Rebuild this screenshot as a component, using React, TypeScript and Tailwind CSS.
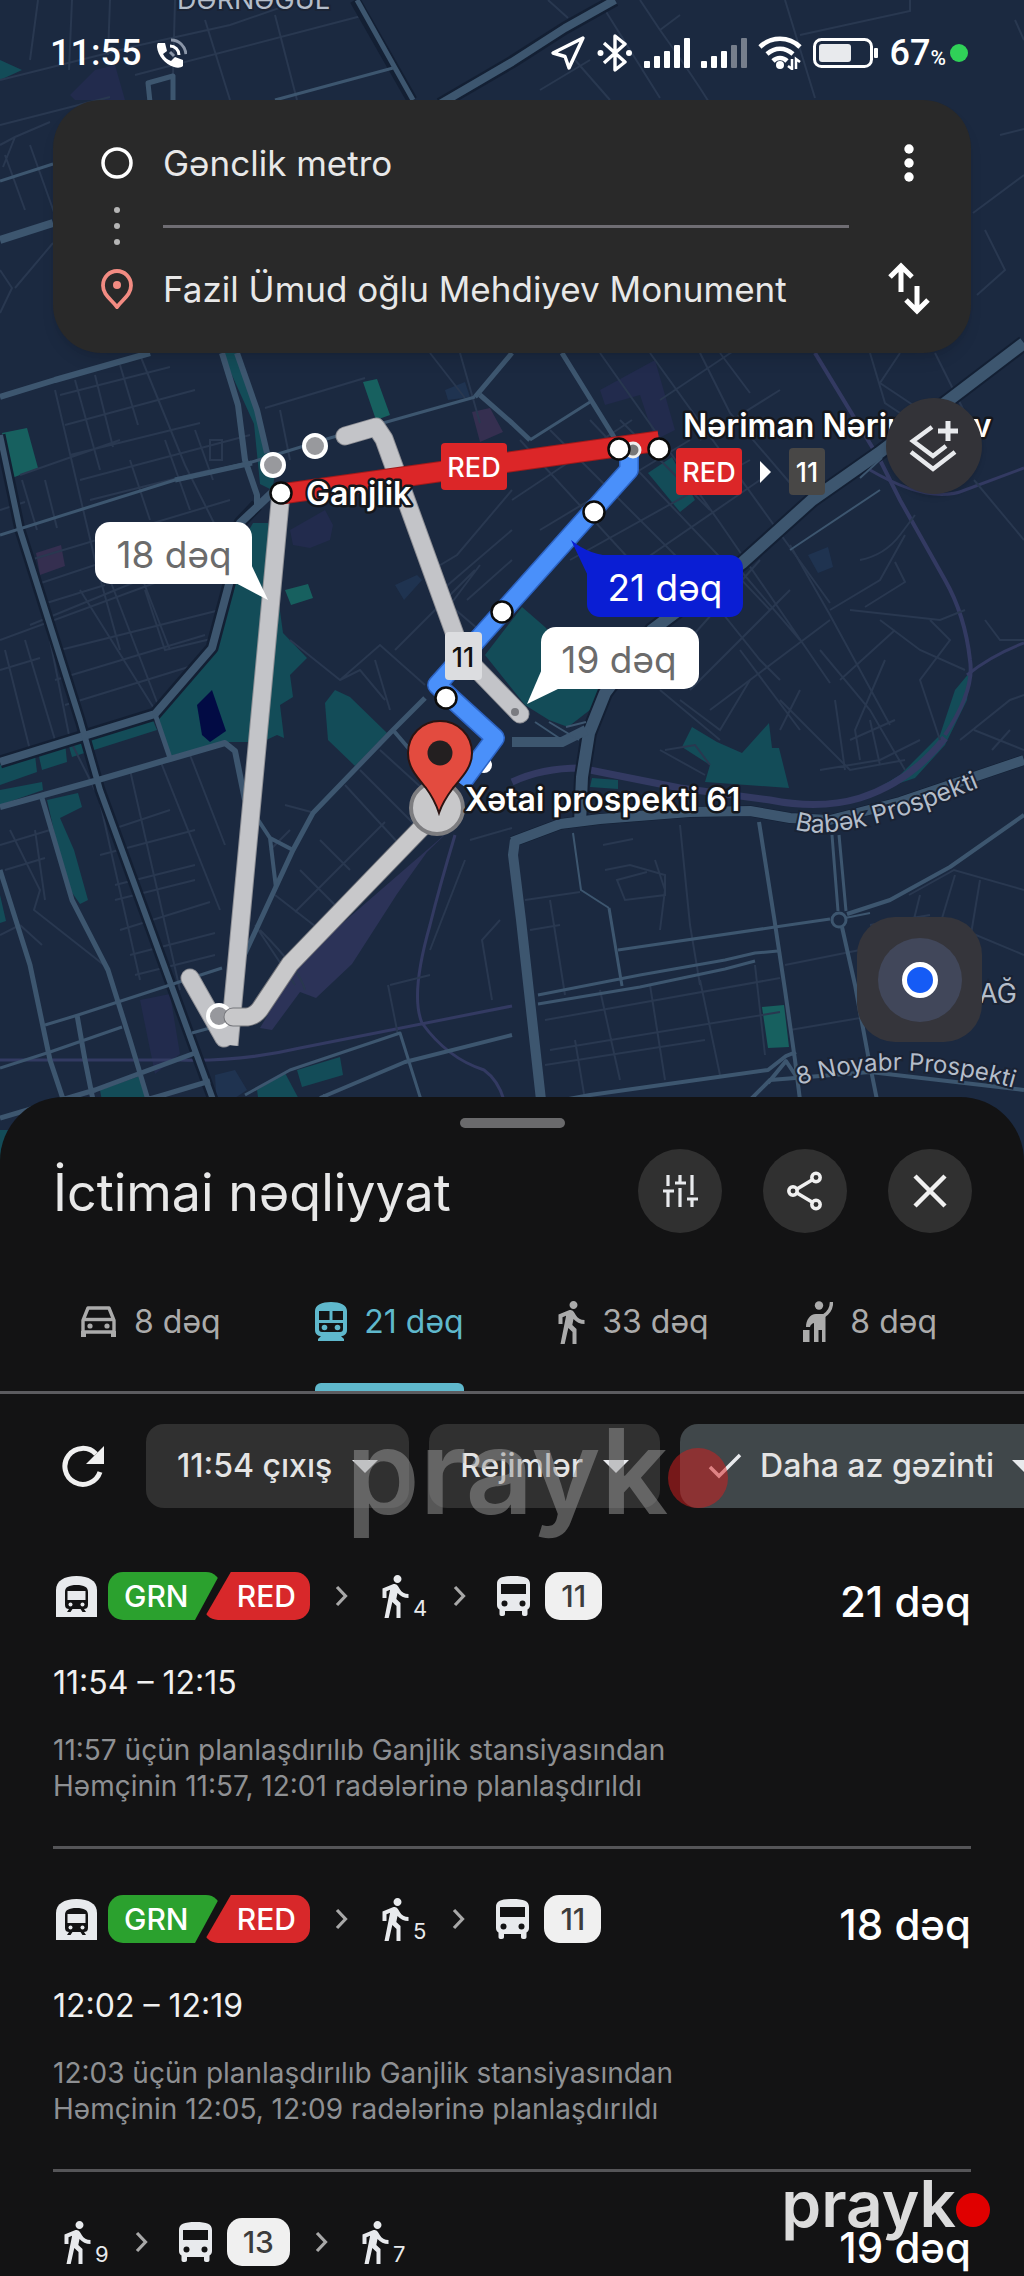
import { useState } from "react";

type Step =
  | { kind: "metro"; lines: [string, string] }
  | { kind: "walk"; min: number }
  | { kind: "bus"; line: string };

type Route = {
  id: number;
  steps: Step[];
  duration: string;
  time?: string;
  details?: string[];
};

const ROUTES: Route[] = [
  {
    id: 1,
    steps: [{ kind: "metro", lines: ["GRN", "RED"] }, { kind: "walk", min: 4 }, { kind: "bus", line: "11" }],
    duration: "21 dəq",
    time: "11:54 – 12:15",
    details: ["11:57 üçün planlaşdırılıb Ganjlik stansiyasından", "Həmçinin 11:57, 12:01 radələrinə planlaşdırıldı"],
  },
  {
    id: 2,
    steps: [{ kind: "metro", lines: ["GRN", "RED"] }, { kind: "walk", min: 5 }, { kind: "bus", line: "11" }],
    duration: "18 dəq",
    time: "12:02 – 12:19",
    details: ["12:03 üçün planlaşdırılıb Ganjlik stansiyasından", "Həmçinin 12:05, 12:09 radələrinə planlaşdırıldı"],
  },
  {
    id: 3,
    steps: [{ kind: "walk", min: 9 }, { kind: "bus", line: "13" }, { kind: "walk", min: 7 }],
    duration: "19 dəq",
  },
];

const MODES = [
  { id: "car", label: "8 dəq", Icon: CarIcon },
  { id: "transit", label: "21 dəq", Icon: TrainIcon },
  { id: "walk", label: "33 dəq", Icon: WalkIcon },
  { id: "hail", label: "8 dəq", Icon: HailIcon },
];

// ---------- icons ----------

function CarIcon() {
  return (
    <svg viewBox="0 0 37 32" className="h-8 w-[37px]" fill="none" stroke="currentColor" strokeWidth="3.4" strokeLinejoin="round">
      <path d="M3 14.5L8 2h21l5 12.5V26H3z" />
      <path d="M3 13.5h31" />
      <path d="M3.5 25v6M33.5 25v6" strokeWidth="5" />
      <circle cx="10" cy="20" r="2.6" fill="currentColor" stroke="none" />
      <circle cx="27" cy="20" r="2.6" fill="currentColor" stroke="none" />
    </svg>
  );
}

function TrainIcon() {
  return (
    <svg viewBox="0 0 32 40" className="h-10 w-8">
      <path fill="currentColor" d="M16 0C7 0 0 3 0 9v19c0 4 3 6 6 6l-3 3v2h26v-2l-3-3c3 0 6-2 6-6V9c0-6-7-9-16-9z" />
      <path fill="#131314" d="M4 9h10.500v9H4zM17.500 9H28v9H17.500zM4 21h24v6c0 2-1 3-3 3H7c-2 0-3-1-3-3z" />
      <circle cx="9.500" cy="25.500" r="2.800" fill="currentColor" />
      <circle cx="22.500" cy="25.500" r="2.800" fill="currentColor" />
    </svg>
  );
}

function WalkIcon() {
  return (
    <svg viewBox="6 1.5 13 21.5" className="h-[43px] w-[27px]" fill="currentColor">
      <path d="M13.5 5.5c1.1 0 2-.9 2-2s-.9-2-2-2-2 .9-2 2 .9 2 2 2zM9.8 8.9L7 23h2.1l1.8-8 2.1 2v6h2v-7.5l-2.1-2 .6-3C14.8 12 16.8 13 19 13v-2c-1.9 0-3.5-1-4.3-2.4l-1-1.6c-.4-.6-1-1-1.7-1-.3 0-.5.1-.8.1L6 8.3V13h2V9.6l1.8-.7" />
    </svg>
  );
}

function HailIcon() {
  return (
    <svg viewBox="0 0 30 42" className="h-[42px] w-[30px]" fill="currentColor">
      <circle cx="16" cy="4.500" r="4.200" />
      <path d="M28.500 1c0 7-3 11-8 14" fill="none" stroke="currentColor" strokeWidth="3.400" />
      <path d="M13 13h9.500v28H19V29h-3.500v12H11V22c-2 .5-3.500 2-4 4H3c0-7 4-13 10-13z" />
      <path d="M0 29h6.500v12H0z" />
    </svg>
  );
}

function MetroIcon() {
  return (
    <svg viewBox="0 0 41 41" className="h-[41px] w-[41px] shrink-0">
      <path fill="#e8eaed" d="M0 41V14C0 5 8 0 20.500 0S41 5 41 14v27z" />
      <path fill="#131314" d="M20.500 9C13 9 9 11 9 16v13c0 3 2 4 4 4l-2 3h3.500l2-3h8l2 3H30l-2-3c2 0 4-1 4-4V16c0-5-4-7-11.500-7z" />
      <path fill="#e8eaed" d="M11.500 15h18v9h-18z" />
      <circle cx="14.500" cy="28.500" r="2" fill="#e8eaed" />
      <circle cx="26.500" cy="28.500" r="2" fill="#e8eaed" />
    </svg>
  );
}

function BusIcon() {
  return (
    <svg viewBox="0 0 33 40" className="h-10 w-[33px] shrink-0">
      <path fill="#e8eaed" d="M16.500 0C5 0 0 2 0 8v21c0 2 1 3.500 2.500 4.500V38c0 1 .7 2 2 2H6c1.200 0 2-1 2-2v-3h17v3c0 1 .8 2 2 2h1.500c1.300 0 2-1 2-2v-4.500C32 32.500 33 31 33 29V8c0-6-5-8-16.500-8z" />
      <path fill="#131314" d="M4 8h25v10H4z" />
      <circle cx="7.500" cy="27.500" r="3" fill="#131314" />
      <circle cx="25.500" cy="27.500" r="3" fill="#131314" />
    </svg>
  );
}

function Chevron() {
  return (
    <svg viewBox="0 0 14 22" className="h-[22px] w-[14px] shrink-0" fill="none" stroke="#a8a8a8" strokeWidth="3.200">
      <path d="M2 2l8.500 9L2 20" />
    </svg>
  );
}

function Caret() {
  return (
    <svg viewBox="0 0 26 13" className="h-[13px] w-[26px] shrink-0" fill="#e8eaed">
      <path d="M0 0h26L13 13z" />
    </svg>
  );
}

function Signal({ level }: { level: number }) {
  return (
    <svg viewBox="0 0 46 30" className="h-[30px] w-[46px]" fill="#fff">
      {[7, 12, 17, 23, 30].map((h, i) => (
        <rect key={h} x={i * 10} y={30 - h} width="6" height={h} rx="1" opacity={i < level ? 1 : 0.4} />
      ))}
    </svg>
  );
}

// ---------- status bar ----------

function StatusBar() {
  return (
    <header className="flex h-[100px] items-center justify-between pb-2 pl-[50px] pr-[56px] pt-[14px] text-white">
      <div className="flex items-center gap-4">
        <span className="font-[Roboto] text-4xl font-medium">11:55</span>
        <svg viewBox="0 0 30 30" className="h-[30px] w-[30px]" fill="none">
          <path fill="#fff" d="M1 5h7l2 8-4 3c2 4 5 6 8 7l4-4 8 3v6c-2 2-6 2-9 1C8 26 1 18 0 9c0-2 0-3 1-4z" />
          <path d="M13 8c5 0 9 4 9 9" stroke="#fff" strokeWidth="3" />
          <path d="M14 2c8 0 14 6 15 14" stroke="#8b96a8" strokeWidth="3" />
          <path d="M13 14l4 4" stroke="#8b96a8" strokeWidth="3" />
        </svg>
      </div>
      <div className="flex items-center gap-[11px]">
        <svg viewBox="0 0 36 36" className="h-9 w-9" fill="none" stroke="#fff" strokeWidth="3.400" strokeLinejoin="round">
          <path d="M33 3L3 18l12 3.500L19 33z" />
        </svg>
        <svg viewBox="0 0 36 38" className="h-[38px] w-9" fill="none" stroke="#fff" strokeWidth="3.400" strokeLinejoin="round">
          <path d="M7 9l21 19-10 8V2l10 8L7 29" />
          <circle cx="3.500" cy="19" r="3" fill="#fff" stroke="none" />
          <circle cx="32" cy="19" r="3" fill="#fff" stroke="none" />
        </svg>
        <Signal level={5} />
        <Signal level={3} />
        <svg viewBox="0 0 44 34" className="h-[34px] w-11" fill="none" stroke="#fff" strokeWidth="4.600">
          <path d="M2 11c11-11 29-11 40 0" />
          <path d="M9 18c8-7 18-7 26 0" />
          <path d="M15 25c4-4 10-4 14 0" />
          <circle cx="22" cy="29" r="4" fill="#fff" stroke="none" />
          <path d="M34 23v10l-4-3M38 33V23l4 3" strokeWidth="2.500" />
        </svg>
        <svg viewBox="0 0 66 30" className="h-[30px] w-[66px]">
          <rect x="1.500" y="1.500" width="57" height="27" rx="7" fill="none" stroke="#fff" strokeWidth="3" />
          <rect x="6" y="6" width="32" height="18" rx="3" fill="#e8eaed" />
          <rect x="61" y="10" width="4" height="10" rx="1" fill="#fff" />
        </svg>
        <div className="flex items-center">
          <span className="font-[Roboto] text-4xl font-medium">
            67<span className="text-[21px]">%</span>
          </span>
          <span className="ml-1 h-[18px] w-[18px] rounded-full bg-[#30d158]" />
        </div>
      </div>
    </header>
  );
}

// ---------- map ----------

function StopDot({ x, y }: { x: number; y: number }) {
  return <circle cx={x} cy={y} r="10.500" fill="#fff" stroke="#0b0b0b" strokeWidth="2.500" />;
}

function MapCanvas() {
  return (
    <svg
      viewBox="0 0 1024 1170"
      preserveAspectRatio="xMidYMin slice"
      className="absolute inset-x-0 top-0 h-[1170px] w-full bg-[#1b2940]"
      role="img"
      aria-label="Xəritə"
    >
      {/* parks */}
      <g fill="#134c58">
        <path d="M0 60l22 10-22 10zM222 353l16 0 20 57 8 40 10 20-4 20-12-6-6-60z" />
        <path d="M253 523h15l15 110 24 25-17 17 3 22-13 8 4 33-7-3-15 7h-39l-53 14-12-38 54-63 16-55 4-40z" />
        <path d="M325 703l10-13 15 7 37 36-32 33-27-26z" />
        <path d="M0 765l35-10 2 17-37 13zM38 752l27-10 2 20-25 8zM68 743l84-25 5 12-85 27zM0 790l42-8 1 8-43 15zM47 800l31-7 4 14-22 11 14 32 14 50-8 4-14-20z" />
        <path d="M0 895l6 26-6 2zM100 1090l40-14 10 30-45 12zM257 1090l28-17 17 32-40 20zM0 1130h20l-20 50z" />
        <path d="M485 655l37-48 23 20 55 63-5 16-27 21-19-7-24-15zM648 473l24-16 23 43-15 12z" />
        <path d="M692 727l25 15 25 11 27-30 3 25h7l10 40-84-6 5-17-28-18zM592 778l26 2v9l-28-2z" />
        <path d="M970 672l-15 18-15 45-40 40-30 18 45-15 30-33 22-45zM297 1070l43-13 3 18-41 12z" />
      </g>
      <g fill="#17605f">
        <path d="M2 433l25-5 11 40-26 10zM285 590l23-6 5 14-22 7zM363 382l14-3 13 36-14 5zM762 1007l22-2 5 42-21 1z" />
      </g>
      <path fill="#020b44" d="M197 705l15-15 14 41-16 11-8-7z" />
      <path fill="#352f50" d="M36 553l25-8 4 21-25 9zM472 412l18-4 13 24-23 10z" />
      <path fill="#222b4d" d="M290 530l35-20 8 15-3 15-20 8-17-3zM95 70l20-5 10 35H75l-5-5zM140 1000l30-6 10 60-25 20zM600 390l55-30 20 70-20 10-15-45-35 10z" />
      <path fill="#1f3350" d="M395 585l22-10 5 5-18 20zM808 555l20-8 5 20-15 6zM215 1075l20-5 12 20-30 20zM445 390l20-8 5 15-22 3z" />

      {/* railways */}
      <g fill="none" stroke="#333a62">
        <path strokeWidth="7" d="M512 782q30-14 68-14l100 20 90 12q50 10 90-2 50-16 85-60" />
        <path strokeWidth="4" d="M945 735q30-45 25-75-5-45-25-80l-45-80-20-40-65-107" />
        <path strokeWidth="3" d="M455 835q-15 50-25 90-20 70-8 98 25 35 62 47 14 10 20 30M0 1060h180q60 2 120-12l212-42M870 470q60 35 95 20l59-22M967 675q25-20 57-32" />
      </g>
      <path fill="#2c3358" d="M450 830L300 960l-40 68 12 2 28-38 16 6 36-34 45-70 30-42z" />

      {/* minor streets */}
      <g fill="none" stroke="#293850" strokeWidth="2">
        <path d="M38 0l-8 60M72 0l-3 70M110 0l-2 55M175 0l-2 75M0 80l140-35 90-20 130-45M205 20l25 80M275 15l22 85M135 75l230-60M0 125l110-28M0 145l15-8 35-15M15 137l-12 30M5 155l20 55M30 145l25 70M0 270l12 18-12 25M15 288l38-45" />
        <path d="M548 0l20 18M640 0l20 30q50 70 65 100M605 10l55 88M575 60l35 40M540 90l50-30M785 0l30 98M800 35l110-24V0M660 30l20-15M1015 20l9 20M985 230l20 40-28 25" />
        <path d="M55 390l40 170 25 90M75 380l25 90M95 375l18 72M120 365l18 60M140 355l45 110 45 90M60 395l110-28M65 425l130-35M70 455l130-32M80 480l170-45M20 475l100-35M0 510l25-8M22 480l15 50M45 480l12 48M90 500l120-30M130 460l20 60M165 440l25 70M195 430l18 50M210 440h12v20h-12z" />
        <path d="M30 560l200-60M35 585l90-30M40 605l65-20M30 625l110-45M0 640l190-70M145 590l20 60 50-12M60 650l160-40M55 680l150-45M65 705l130-40M80 590l75 120M110 580l50 130M135 560l35 90M0 670l40-12M5 650l25 100M25 640l30 100M50 640l20 100M70 740l25 50M95 780l45 200M130 770l50 220M160 760l60 150M190 755l35 90" />
        <path d="M10 830l30 60-6 20 70 55M0 845l50-15M5 870l40-12M110 830l60-20M100 855l95-25M115 885l80-20M115 900l80-20M120 930l90-28M130 955l85-22M135 975l80-20M35 830l10 70M20 925l22 20M0 935l20-10" />
        <path d="M265 408l100-30M280 410l10 50M430 353l35 45M460 353l20 70M512 490l-55 65-25 15M512 530l-70 60M480 565l-30 40 35 30M512 560l-45 40M395 650l80-80M290 640l50 40 40-35 45 40M340 680l20-10 25 30M375 660l15 50" />
        <path d="M600 353l120 170 110 160M650 353l180 250M700 353l30 60 60 70M720 353l30 40M512 500l120-80M540 530l150-90M570 560l180-100M600 590l160-110M520 440l110 120M550 430l180 180M590 420l180 190M620 420l90 90M660 400l90-60M700 440l80-50M760 560l-80 90M790 590l-100 100M830 620l-120 90M680 560l80 100 20 20M740 570l60 70" />
        <path d="M790 545l40 70 60 110M830 610l50-30 25-45M860 560q25-5 40-25l15-20M895 562l10 20-40 25M850 610l90 10 25-10M880 620l40 30 45 20M820 650l50 60 35 60M840 680l55-50M885 660l-30 70 5 30M780 700l70 70 55-10M800 690l-20 40M740 650l60 80M930 620l20 20-30 40 20 60M985 620l15 20h24M1024 540l-50-60M960 740l50-40 14-5M1024 750l-50-20M1010 730l-18 20" />
        <path d="M660 750l45 25M665 750l30-5 15 20M680 700l40 30 30-50M720 740l-60-50M820 770l60-10 40-20M835 700l10 70M870 720l10 45M850 740l45-20" />
        <path d="M603 845l30-6M605 870l25-5 35 10v20l-40 5-8-20 30-8M655 860l10 30-5 40M680 825l10 100 10 60M525 900l55-8M550 900l15 95M530 930l30-5M785 965l110-22M790 1030l70-12M1024 890l-70-20-45 25M980 880l-10 60M955 875l-15 50M920 895l-10 40M1024 955l-60-25M870 925l60-10" />
        <path d="M545 1020l235-42M550 1050l230-38M545 1065l160-25M600 990l20 90M650 985l15 95M700 980l20 95M755 965l10 90M575 1040l10 60M500 920l-18 20 10 60M390 985l40-10M388 985l10 50M465 860l-35 90M470 840l42-12" />
        <path d="M290 830l-20 20M285 805l30 8M360 770l60 60M345 785l55 60M380 750l55 50M295 912l90-90M320 840l30 30M300 870l40 40M275 895l45 35M255 925l40 60M260 930q40 40 45 60" />
        <path d="M973 213l51-38M1000 135l24-6M870 353l15 50 30 20M935 353l30 60M900 353l-20 30 60 40" />
      </g>

      {/* roads: dark casing below, fill on top */}
      <g fill="none" strokeLinejoin="round">
        <g stroke="#131f33">
          <path strokeWidth="16" d="M1024 343l-75 57-70 53-67 47-70 63-90 67-47 63-16 40-7 44-2 46" />
          <path strokeWidth="13" d="M615 0l-50 28-53 34-72 42M257 505l-17 18-8 50-20 75-57 66-155 48" />
          <path strokeWidth="11" d="M0 435l20 95 60 190 20 70 115 315 20 60M355 0l57 100M512 842l48-18 40-5 90-7 60-1 40 7 40 2 70-18 124-42" />
        </g>
        <g stroke="#3d566f">
          <path strokeWidth="12" d="M1024 343l-75 57-70 53-67 47-70 63-90 67-47 63-16 40-7 44-2 46" />
          <path strokeWidth="10" d="M512 842l48-18 40-5 90-7 60-1 40 7 40 2 70-18 124-42M512 742h50l24-12M515 840l-2 15 8 65 20 180 10 60" />
          <path strokeWidth="8" d="M615 0l-50 28-53 34-72 42M275 490l-35 33-8 50-20 75-57 66-155 48M0 240l53-17" />
          <path strokeWidth="6" d="M0 435l20 95 60 190 20 70 115 315 20 60M0 397l55-17 95-27M222 353l16 52 7 55 12 35v10M237 353l20 57 10 43M0 807l98-27 72-21 55-16 10 8 10 49" />
          <path strokeWidth="5" d="M357 0l56 100M150 102l-2-19 25-7v26M175 480l77-17M42 798l30 102 36 70 22 70 24 80M0 870l30 95 20 95 30 90M155 714l15 44M425 698l-32 32-80 83-20 37-50 108M77 1015l8 45 20 100M0 1118l95-28 100-37M110 1110l50-14 50-15M480 395l32 28 18 17M562 353l60 97M475 397l37-44" />
          <path strokeWidth="4" d="M320 1098l85-36 107-27M295 1140l30-45M759 822l15 95 11 73 10 70 5 40M842 927l13 58 13 70 12 60M847 914l43-14 60-33 74-52M500 1112l90-17 178-25 18-14 10-4M730 1120l40-40 100-8 154 18M390 1140l-20-30M245 800l25 38 23 12M270 838l6 50M393 730l17 20" />
          <path strokeWidth="3" d="M0 181l53-17M275 100l118-32M0 535l175-55 77-18 78-24 145-41M530 440l60-38M0 1068l50-16 72-25M45 1025l33-10 92-30 52-17M192 1033l18-5M245 1095l45-25 110-37 22 70M832 835l6 76M839 835l7 76M618 950l157-23 55-8M538 995l102-20 85-15 30-7 23-2M538 1004l102-17 85-18 30-8M609 908l13 78" />
          <path strokeWidth="2" d="M573 833l8 57 28 18M535 722l27 18M549 722l30 18M566 727l20-5M845 918l25-5M790 550l90-60M860 478l22-20" />
          <circle cx="839" cy="920" r="7" strokeWidth="3" fill="#1b2940" />
          <path strokeWidth="4" d="M768 1083l18-22 12 18" />
        </g>
      </g>

      {/* place names under the routes */}
      <g fill="#b4bdca" stroke="#1a2334" strokeWidth="4" paintOrder="stroke" fontSize="27">
        <text x="177" y="9">DƏRNƏGÜL</text>
        <text x="979" y="1003">AĞ</text>
        <path id="babek" d="M795 829q50 18 215-55" fill="none" stroke="none" />
        <path id="noyabr" d="M799 1085q100-32 225 6" fill="none" stroke="none" />
        <text fontSize="25"><textPath href="#babek">Babək Prospekti</textPath></text>
        <text fontSize="24"><textPath href="#noyabr">8 Noyabr Prospekti</textPath></text>
      </g>

      {/* alternative routes */}
      <g fill="none" stroke="#8f9096" strokeWidth="19" strokeLinejoin="round">
        <path strokeLinecap="round" d="M345 436l31-9 8 12 78 215 58 60" />
        <path d="M281 492l-52 553" />
        <path strokeLinecap="round" d="M190 978l34 60" />
      </g>
      <g fill="none" stroke="#c3c4c8" strokeWidth="17" strokeLinejoin="round">
        <path strokeLinecap="round" d="M345 436l31-9 8 12 78 215 58 60" />
        <path d="M281 492l-52 553" />
        <path strokeLinecap="round" d="M190 978l34 60" />
      </g>
      <circle cx="219" cy="1016" r="11" fill="#97989d" stroke="#fff" strokeWidth="4" />
      <g fill="none" strokeLinejoin="round" strokeLinecap="round">
        <path stroke="#75767b" strokeWidth="19" d="M233 1017h14q8-1 13-8l30-45 140-145" />
        <path stroke="#c8c8ca" strokeWidth="17" d="M233 1017h14q8-1 13-8l30-45 140-145" />
      </g>
      <circle cx="515" cy="712" r="4" fill="#7a7b80" />

      {/* selected route */}
      <circle cx="484" cy="765" r="8" fill="#fff" />
      <g fill="none" strokeLinejoin="round">
        <path stroke="#2d64c4" strokeWidth="20" d="M629 452v18L437 685l58 53-34 46" />
        <path stroke="#4a90fa" strokeWidth="17" d="M629 452v18L437 685l58 53-34 46" />
        <path stroke="#a01a1a" strokeWidth="21" d="M281 494l378-53" />
        <path stroke="#dc2628" strokeWidth="19" d="M281 494l378-53" />
      </g>
      <circle cx="633" cy="450" r="7" fill="#777" stroke="#eee" strokeWidth="3" />
      <circle cx="273" cy="465" r="11" fill="#98999d" stroke="#fff" strokeWidth="4" />
      <circle cx="315" cy="446" r="11" fill="#98999d" stroke="#fff" strokeWidth="4" />
      <StopDot x={281} y={493} />
      <StopDot x={619} y={449} />
      <StopDot x={659} y={449} />
      <StopDot x={594} y={512} />
      <StopDot x={502} y={612} />
      <StopDot x={446} y={698} />

      {/* destination */}
      <circle cx="437" cy="808" r="26" fill="#c8c8ca" stroke="#7d7d80" strokeWidth="4" />
      <path
        d="M440 721c-18 0-32 14-32 32 0 14 8 23 18 35 6 8 10 16 13 25 3-9 8-17 14-25 10-12 19-21 19-35 0-18-14-32-32-32z"
        fill="#e34b3f" stroke="#2b1412" strokeWidth="2"
      />
      <circle cx="440" cy="753" r="12.500" fill="#231f20" />

      {/* line badges */}
      <rect x="441" y="443" width="66" height="47" rx="4" fill="#dc2628" />
      <rect x="676" y="448" width="66" height="47" rx="4" fill="#dc2628" />
      <rect x="789" y="448" width="36" height="47" rx="4" fill="#484746" />
      <rect x="445" y="632" width="37" height="48" rx="4" fill="#dcdde0" />
      <path d="M760 461l11 11-11 11z" fill="#fff" />
      <g fontSize="27" fontWeight="500" textAnchor="middle" fill="#fff">
        <text x="474" y="477">RED</text>
        <text x="709" y="482">RED</text>
        <text x="807" y="482">11</text>
        <text x="463" y="667" fill="#111">11</text>
      </g>

      {/* stop names */}
      <g fill="#fff" stroke="#15171c" strokeWidth="5" strokeLinejoin="round" paintOrder="stroke" fontSize="32" fontWeight="600">
        <text x="306" y="505">Ganjlik</text>
        <text x="683" y="437">Nəriman Nərimanov</text>
        <text x="465" y="811">Xətai prospekti 61</text>
      </g>

      {/* duration bubbles */}
      <path d="M230 580l38 20-18-38z" fill="#fff" />
      <rect x="95" y="522" width="157" height="62" rx="15" fill="#fff" />
      <path d="M571 540l18 38 26-22q-25 0-44-16z" fill="#0a1ed4" />
      <rect x="587" y="555" width="156" height="62" rx="13" fill="#0a1ed4" />
      <path d="M527 704l18-42 15 26z" fill="#fff" />
      <rect x="541" y="627" width="158" height="62" rx="15" fill="#fff" />
      <g fontSize="37" fill="#6b6b6b" textAnchor="middle">
        <text x="174" y="568">18 dəq</text>
        <text x="665" y="601" fill="#fff">21 dəq</text>
        <text x="619" y="673">19 dəq</text>
      </g>
    </svg>
  );
}

// ---------- search card ----------

function SearchCard() {
  const [from, setFrom] = useState("Gənclik metro");
  const [to, setTo] = useState("Fazil Ümud oğlu Mehdiyev Monument");

  const swap = () => {
    setFrom(to);
    setTo(from);
  };

  return (
    <div className="mx-[53px] grid grid-cols-[32px_1fr_60px] items-center gap-x-[30px] rounded-[48px] bg-[#292929] pb-[26px] pl-12 pr-8 pt-[25px] shadow-lg">
      <svg viewBox="0 0 32 32" className="h-8 w-8" fill="none" stroke="#fff" strokeWidth="3.500">
        <circle cx="16" cy="16" r="14" />
      </svg>
      <input
        aria-label="Başlanğıc"
        value={from}
        onChange={(e) => setFrom(e.target.value)}
        className="h-[76px] w-full bg-transparent text-[35px] text-[#e8e8e8] outline-none"
      />
      <button aria-label="Digər seçimlər" className="flex h-[76px] items-center justify-center">
        <svg viewBox="0 0 10 40" className="h-10 w-[10px]" fill="#fff">
          <circle cx="5" cy="6" r="4.700" />
          <circle cx="5" cy="20" r="4.700" />
          <circle cx="5" cy="34" r="4.700" />
        </svg>
      </button>

      <svg viewBox="0 0 32 50" className="h-[50px] w-8" fill="#b5b5b5">
        <circle cx="16" cy="9" r="3" />
        <circle cx="16" cy="25" r="3" />
        <circle cx="16" cy="41" r="3" />
      </svg>
      <div className="h-[3px] bg-[#6f6d73]" />
      <span />

      <svg viewBox="0 0 32 40" className="h-10 w-8" fill="none" stroke="#f28b82" strokeWidth="3.800">
        <path d="M16 2C8.500 2 2 8 2 16.500 2 26 10 30 16 38c6-8 14-12 14-21.500C30 8 23.500 2 16 2z" />
        <circle cx="16" cy="16" r="4" fill="#f28b82" stroke="none" />
      </svg>
      <input
        aria-label="Təyinat"
        value={to}
        onChange={(e) => setTo(e.target.value)}
        className="h-[76px] w-full bg-transparent text-[35px] text-[#e8e8e8] outline-none"
      />
      <button onClick={swap} aria-label="Yerlərini dəyiş" className="flex h-[76px] items-center justify-center">
        <svg viewBox="0 0 42 54" className="h-[54px] w-[42px]" fill="none" stroke="#fff" strokeWidth="5">
          <path d="M13 30V5M2 15L13 4l11 11" />
          <path d="M29 24v25M18 38l11 11 11-11" />
        </svg>
      </button>
    </div>
  );
}

// ---------- bottom sheet ----------

function StepView({ step }: { step: Step }) {
  if (step.kind === "metro") {
    return (
      <div className="flex items-center gap-[11px] px-[3px]">
        <MetroIcon />
        <div className="flex text-[30px] font-medium leading-[48px] text-white">
          <span className="w-[113px] rounded-[15px] bg-[#2ba12e] pl-4 [clip-path:polygon(0_0,100%_0,77%_100%,0_100%)]">
            {step.lines[0]}
          </span>
          <span className="-ml-[18px] w-[107px] rounded-[15px] bg-[#d8282a] pr-[14px] text-right [clip-path:polygon(26%_0,100%_0,100%_100%,0_100%)]">
            {step.lines[1]}
          </span>
        </div>
      </div>
    );
  }
  if (step.kind === "walk") {
    return (
      <div className="flex items-end gap-1 pl-[11px] pr-1 text-[#e8eaed]">
        <WalkIcon />
        <span className="text-[22px] leading-5">{step.min}</span>
      </div>
    );
  }
  return (
    <div className="flex items-center gap-[15px] pl-2 pr-[3px]">
      <BusIcon />
      <span className="rounded-[15px] bg-[#f0f0f0] px-4 text-[30px] font-medium leading-[48px] text-[#3c3c3c]">
        {step.line}
      </span>
    </div>
  );
}

function RouteItem({ route }: { route: Route }) {
  return (
    <li className="border-b-[3px] border-[#555558] pb-[42px] pt-10 last:border-0 last:pb-0">
      <div className="flex items-center justify-between">
        <div className="flex items-center gap-[22px]">
          {route.steps.map((s, i) => (
            <div key={i} className="flex items-center gap-[22px]">
              {i > 0 && <Chevron />}
              <StepView step={s} />
            </div>
          ))}
        </div>
        <span className="pt-3 text-[42px] font-medium leading-[48px] text-white">{route.duration}</span>
      </div>
      {route.time && <p className="mt-[37px] text-[32px] leading-10 text-[#f0f0f0]">{route.time}</p>}
      {route.details && (
        <div className="mt-[29px] text-[28px] leading-9 text-[#8e9093]">
          {route.details.map((d) => <p key={d}>{d}</p>)}
        </div>
      )}
    </li>
  );
}

function Sheet() {
  const [mode, setMode] = useState("transit");

  return (
    <section className="relative rounded-t-[64px] bg-[#131314] pt-[21px]">
      <div className="mx-auto h-[10px] w-[105px] rounded-full bg-[#6a6a6c]" />

      <div className="flex items-center justify-between pl-[53px] pr-[52px] pt-[21px]">
        <h1 className="pt-[3px] text-[52px] leading-[81px] text-[#e8e8e8]">İctimai nəqliyyat</h1>
        <div className="flex gap-[41px]">
          <button aria-label="Seçimlər" className="flex h-[84px] w-[84px] items-center justify-center rounded-full bg-[#303030]">
            <svg viewBox="0 0 36 34" className="h-[34px] w-9" fill="none" stroke="#e8eaed" strokeWidth="3.200">
              <path d="M6 1v11M6 16v17M1 17h11M18 1v7M18 14v19M13 9h11M30 1v20M30 26v7M25 25h11" />
            </svg>
          </button>
          <button aria-label="Paylaş" className="flex h-[84px] w-[84px] items-center justify-center rounded-full bg-[#303030]">
            <svg viewBox="0 0 36 40" className="h-10 w-9" fill="none" stroke="#f0f0f0" strokeWidth="3.500">
              <path d="M10 18l15-9M10 22l15 9" />
              <circle cx="6" cy="20" r="4.200" />
              <circle cx="29" cy="6.500" r="4.200" />
              <circle cx="29" cy="33.500" r="4.200" />
            </svg>
          </button>
          <button aria-label="Bağla" className="flex h-[84px] w-[84px] items-center justify-center rounded-full bg-[#303030]">
            <svg viewBox="0 0 34 34" className="h-[34px] w-[34px]" fill="none" stroke="#f0f0f0" strokeWidth="4.500">
              <path d="M2 2l30 30M32 2L2 32" />
            </svg>
          </button>
        </div>
      </div>

      <div role="tablist" className="flex justify-between border-b-[3px] border-[#5c5c60] pl-20 pr-[87px] pt-[60px]">
        {MODES.map(({ id, label, Icon }) => (
          <button
            key={id}
            role="tab"
            aria-selected={mode === id}
            onClick={() => setMode(id)}
            className={`flex flex-col gap-8 ${mode === id ? "text-[#5fb8cc]" : "text-[#ababab]"}`}
          >
            <span className="flex h-[58px] items-center gap-[17px] text-[32px]">
              <Icon />
              {label}
            </span>
            <span className={`h-2 w-full rounded-t-md ${mode === id ? "bg-[#5fb8cc]" : ""}`} />
          </button>
        ))}
      </div>

      <div className="flex items-center overflow-hidden pl-[62px] pt-[30px] text-[32px] font-medium text-[#e4e4e4]">
        <button aria-label="Yenilə" className="mr-[41px] shrink-0">
          <svg viewBox="0 0 43 43" className="h-[43px] w-[43px]" fill="none" stroke="#f0f0f0" strokeWidth="5">
            <path d="M38 27A18 18 0 1 1 34 9" />
            <path d="M42 1v18H24z" fill="#f0f0f0" stroke="none" />
          </svg>
        </button>
        <div className="flex shrink-0 gap-5">
          <button className="flex h-[84px] items-center gap-5 rounded-[18px] bg-[#303030] px-[31px]">
            11:54 çıxış <Caret />
          </button>
          <button className="flex h-[84px] items-center gap-5 rounded-[18px] bg-[#303030] px-[31px]">
            Rejimlər <Caret />
          </button>
          <button className="flex h-[84px] items-center gap-[18px] whitespace-nowrap rounded-[18px] bg-[#40474a] px-7">
            <svg viewBox="0 0 34 26" className="h-[26px] w-[34px]" fill="none" stroke="#e8eaed" strokeWidth="3.500">
              <path d="M2 14l9 9L32 2" />
            </svg>
            Daha az gəzinti
            <Caret />
          </button>
        </div>
      </div>

      <ul className="mt-[18px] px-[53px]">
        {ROUTES.map((r) => <RouteItem key={r.id} route={r} />)}
      </ul>

      {/* brand marks printed over the sheet */}
      <div className="pointer-events-none absolute left-[346px] top-[299px] flex items-center opacity-50">
        <span className="text-[118px] font-semibold leading-[150px] text-[#9a9a9a]">prayk</span>
        <span className="mt-[14px] h-[60px] w-[60px] rounded-full bg-[#d81e1e]" />
      </div>
      <div className="pointer-events-none absolute bottom-0 right-[34px] flex items-center pb-7">
        <span className="text-[64px] font-semibold leading-[80px] text-[#dcdcdc]">prayk</span>
        <span className="mt-3 h-[34px] w-[34px] rounded-full bg-[#e00000]" />
      </div>
    </section>
  );
}

export default function App() {
  return (
    <main className="relative min-h-screen overflow-hidden bg-[#131314] font-[Inter,'Noto_Sans',sans-serif]">
      <MapCanvas />
      <div className="relative">
        <StatusBar />
        <SearchCard />
        <div className="flex flex-col items-end pb-[55px] pr-[42px] pt-[45px]">
          <button aria-label="Qatlar" className="flex h-24 w-24 items-center justify-center rounded-full bg-[#333338] shadow-md">
            <svg viewBox="0 0 52 54" className="h-[54px] w-[52px]" fill="none" stroke="#e8eaed" strokeWidth="4.500">
              <path d="M24 8L5 22l20 15 13-10" />
              <path d="M3 33l22 17 22-17" />
              <path d="M40 2v20M30 12h20" strokeWidth="5" />
            </svg>
          </button>
          <button aria-label="Mənim yerim" className="mt-[423px] flex h-[125px] w-[125px] items-center justify-center rounded-[38px] bg-[#35353b]">
            <span className="flex h-[84px] w-[84px] items-center justify-center rounded-full bg-[#41475a]">
              <span className="h-9 w-9 rounded-full border-[5px] border-white bg-[#155bf5]" />
            </span>
          </button>
        </div>
        <Sheet />
      </div>
    </main>
  );
}
